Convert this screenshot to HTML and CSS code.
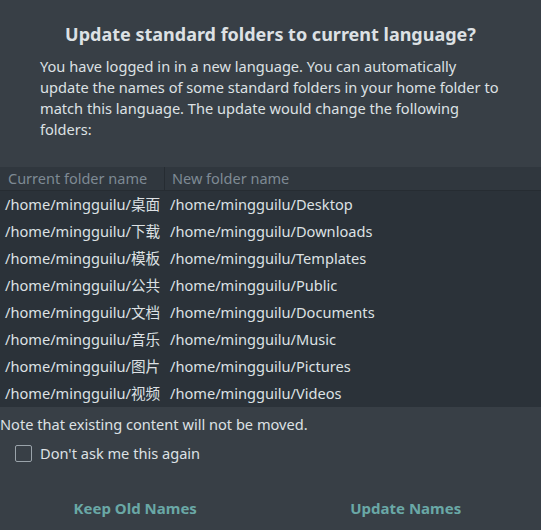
FILE: index.html
```html
<!DOCTYPE html>
<html>
<head>
<meta charset="utf-8">
<link rel="stylesheet" href="styles.css">
</head>
<body>
<div class="dialog">
  <h1 class="title">Update standard folders to current language?</h1>
  <p class="message">You have logged in in a new language. You can automatically update the names of some standard folders in your home folder to match this language. The update would change the following folders:</p>
  <div class="table">
    <div class="head">
      <div class="hcell c1">Current folder name</div>
      <div class="hcell c2">New folder name</div>
    </div>
    <div class="row"><div class="cell c1">/home/mingguilu/桌面</div><div class="cell c2">/home/mingguilu/Desktop</div></div>
    <div class="row"><div class="cell c1">/home/mingguilu/下载</div><div class="cell c2">/home/mingguilu/Downloads</div></div>
    <div class="row"><div class="cell c1">/home/mingguilu/模板</div><div class="cell c2">/home/mingguilu/Templates</div></div>
    <div class="row"><div class="cell c1">/home/mingguilu/公共</div><div class="cell c2">/home/mingguilu/Public</div></div>
    <div class="row"><div class="cell c1">/home/mingguilu/文档</div><div class="cell c2">/home/mingguilu/Documents</div></div>
    <div class="row"><div class="cell c1">/home/mingguilu/音乐</div><div class="cell c2">/home/mingguilu/Music</div></div>
    <div class="row"><div class="cell c1">/home/mingguilu/图片</div><div class="cell c2">/home/mingguilu/Pictures</div></div>
    <div class="row"><div class="cell c1">/home/mingguilu/视频</div><div class="cell c2">/home/mingguilu/Videos</div></div>
  </div>
  <p class="note">Note that existing content will not be moved.</p>
  <label class="check"><span class="box"></span><span>Don't ask me this again</span></label>
  <div class="actions">
    <button class="btn">Keep Old Names</button>
    <button class="btn">Update Names</button>
  </div>
</div>
</body>
</html>
```
FILE: styles.css
```css
html, body {
  margin: 0;
  padding: 0;
  background: #383f46;
}
.dialog {
  width: 541px;
  height: 530px;
  background: #383f46;
  color: #dde1e4;
  font-family: "Noto Sans", "Noto Sans CJK SC", sans-serif;
  font-size: 14.6px;
  display: flex;
  flex-direction: column;
  overflow: hidden;
}
.title {
  margin: 22px 0 0;
  font-size: 18px;
  font-weight: bold;
  text-align: center;
  line-height: 24px;
  color: #dde1e4;
}
.message {
  margin: 10px 38px 0 40px;
  line-height: 21px;
}
.table {
  margin-top: 27px;
  background: #2b3239;
}
.head {
  display: flex;
  height: 23px;
  background: #30373e;
  border-bottom: 1px solid #262c32;
}
.hcell {
  color: #7e8a94;
  font-size: 14.5px;
  line-height: 23px;
  padding-left: 8px;
  box-sizing: border-box;
}
.hcell.c1 {
  width: 165px;
  border-right: 1px solid #262c32;
}
.hcell.c2 {
  padding-left: 7px;
}
.row {
  display: flex;
  height: 27px;
  align-items: center;
}
.cell {
  box-sizing: border-box;
  white-space: nowrap;
  line-height: 27px;
}
.cell.c1 {
  width: 165px;
  padding-left: 5px;
}
.cell.c2 {
  padding-left: 5px;
}
.note {
  margin: 6px 0 0 0;
  line-height: 22px;
}
.check {
  display: flex;
  align-items: center;
  gap: 8px;
  margin: 7px 0 0 15px;
  line-height: 22px;
}
.box {
  width: 15px;
  height: 15px;
  border: 1px solid #9aa3aa;
  border-radius: 2px;
  box-sizing: content-box;
}
.actions {
  display: flex;
  margin-top: auto;
  height: 44px;
}
.btn {
  flex: 1;
  background: none;
  border: none;
  font-family: "Noto Sans", sans-serif;
  font-size: 15px;
  font-weight: bold;
  color: #6aa8a6;
  padding: 0;
}
```
